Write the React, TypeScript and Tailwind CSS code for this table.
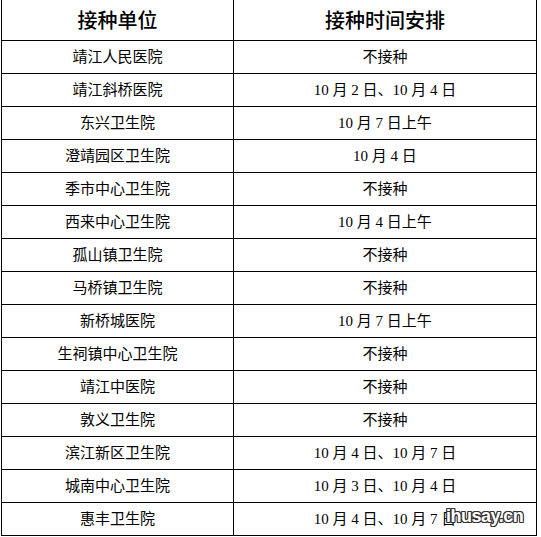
import React from "react";

const rows: [string, string][] = [
  ["靖江人民医院", "不接种"],
  ["靖江斜桥医院", "10 月 2 日、10 月 4 日"],
  ["东兴卫生院", "10 月 7 日上午"],
  ["澄靖园区卫生院", "10 月 4 日"],
  ["季市中心卫生院", "不接种"],
  ["西来中心卫生院", "10 月 4 日上午"],
  ["孤山镇卫生院", "不接种"],
  ["马桥镇卫生院", "不接种"],
  ["新桥城医院", "10 月 7 日上午"],
  ["生祠镇中心卫生院", "不接种"],
  ["靖江中医院", "不接种"],
  ["敦义卫生院", "不接种"],
  ["滨江新区卫生院", "10 月 4 日、10 月 7 日"],
  ["城南中心卫生院", "10 月 3 日、10 月 4 日"],
  ["惠丰卫生院", "10 月 4 日、10 月 7 日"],
];

export default function App() {
  return (
    <div className="relative w-[541px] h-[537px] bg-white overflow-hidden text-black">
      <div
        className="ml-[1px] w-[536px] border-l border-r border-black"
        style={{ fontFamily: '"Liberation Serif", "Noto Sans CJK SC", serif' }}
      >
        <div className="grid grid-cols-[232px_1fr] h-[41px] border-b border-black">
          <div
            className="border-r border-black flex items-center justify-center text-[20px] font-medium"
            style={{ fontFamily: '"Noto Sans CJK SC", sans-serif' }}
          >
            接种单位
          </div>
          <div
            className="flex items-center justify-center text-[20px] font-medium"
            style={{ fontFamily: '"Noto Sans CJK SC", sans-serif' }}
          >
            接种时间安排
          </div>
        </div>
        {rows.map(([a, b], i) => (
          <div key={i} className="grid grid-cols-[232px_1fr] h-[33px] border-b border-black">
            <div className="border-r border-black flex items-center justify-center text-[15px] whitespace-pre">
              {a}
            </div>
            <div className="flex items-center justify-center text-[15px] whitespace-pre">{b}</div>
          </div>
        ))}
      </div>
      <div
        className="absolute left-[446px] top-[503px] text-[18px] font-bold text-white tracking-[-0.5px]"
        style={{
          fontFamily: '"Liberation Sans", sans-serif',
          textShadow:
            "1px 0 0 #333, -1px 0 0 #333, 0 1px 0 #333, 0 -1px 0 #333, 1px 1px 0 #333, -1px -1px 0 #333, 1px -1px 0 #333, -1px 1px 0 #333",
        }}
      >
        ihusay.cn
      </div>
    </div>
  );
}
